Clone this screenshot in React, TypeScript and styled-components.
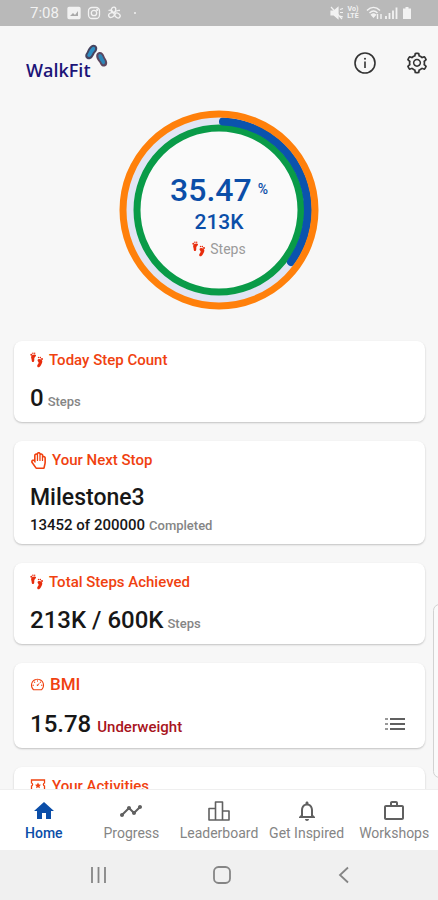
import React from "react";
import styled, { createGlobalStyle } from "styled-components";
import { AiOutlineSetting, AiOutlineDashboard } from "react-icons/ai";
import { FaRegHandPaper } from "react-icons/fa";
import { MdHome, MdTimeline, MdNotificationsNone, MdWorkOutline } from "react-icons/md";

const colors = {
  page: "#f7f7f7",
  blue: "#0b4ea8",
  accent: "#f0410f",
  ink: "#171717",
  muted: "#858585",
};

const GlobalStyle = createGlobalStyle`
  *, *::before, *::after { box-sizing: border-box; }
  body { margin: 0; background: ${colors.page}; font-family: Roboto, sans-serif; color: ${colors.ink}; }
  h1, h2, p { margin: 0; font-weight: 500; }
  svg { display: block; flex: none; }
`;

const Screen = styled.div`
  position: relative;
  display: flex;
  flex-direction: column;
  height: 100vh;
  overflow: hidden;
`;

const StatusBar = styled.div`
  display: flex;
  align-items: center;
  justify-content: space-between;
  flex: none;
  height: 26px;
  padding: 0 26px 0 30px;
  background: #b9b9b9;
  color: #f2f2f2;
  font-size: 15px;
`;

const StatusGroup = styled.div<{ $gap: number }>`
  display: flex;
  align-items: center;
  gap: ${(p) => p.$gap}px;
`;

const Header = styled.header`
  display: flex;
  align-items: center;
  justify-content: space-between;
  flex: none;
  height: 74px;
  padding: 0 9px 0 26px;
`;

const Brand = styled.h1`
  display: flex;
  color: #1c1478;
  font: 600 18px/24px "Open Sans", sans-serif;
  padding-top: 14px;
`;

const BrandMark = styled.svg`
  margin: -14px 0 0 -9px;
`;

const HeaderActions = styled.div`
  display: flex;
  gap: 28px;
  color: #333;
`;

const IconButton = styled.button`
  display: flex;
  padding: 0;
  border: 0;
  background: none;
  color: inherit;
  cursor: pointer;
`;

const Content = styled.main`
  flex: 1;
  min-height: 0;
  overflow: hidden;
`;

const Gauge = styled.section`
  display: grid;
  justify-items: center;
  align-items: center;
  padding: 10px 0 31px;

  & > * {
    grid-area: 1 / 1;
  }
`;

const GaugeText = styled.div`
  display: flex;
  flex-direction: column;
  align-items: center;
  color: ${colors.blue};
  padding-top: 14px;
`;

const Percent = styled.p`
  display: flex;
  gap: 6px;
  font-size: 32px;
  line-height: 36px;
`;

const PercentSign = styled.span`
  font-size: 14px;
  line-height: 34px;
`;

const GaugeTotal = styled.p`
  font-size: 21px;
  line-height: 28px;
`;

const GaugeUnit = styled.p`
  display: flex;
  align-items: center;
  gap: 4px;
  color: #9a9a9a;
  font-size: 14px;
  font-weight: 400;
  line-height: 26px;
`;

const CardList = styled.div`
  display: flex;
  flex-direction: column;
  gap: 19px;
  padding: 0 13px 0 14px;
`;

const Card = styled.section`
  padding: 9px 20px 8px 16px;
  border-radius: 8px;
  background: #fff;
  box-shadow: 0 1px 2px rgba(0, 0, 0, 0.22);
`;

const CardTitle = styled.h2<{ $large?: boolean }>`
  display: flex;
  align-items: center;
  gap: 5px;
  color: ${colors.accent};
  font-size: ${(p) => (p.$large ? 17 : 15)}px;
  line-height: ${(p) => (p.$large ? 24 : 20)}px;
`;

const CardRow = styled.div`
  display: flex;
  align-items: center;
  justify-content: space-between;
  padding-top: 12px;
`;

const Value = styled.p<{ $name?: boolean }>`
  display: flex;
  align-items: baseline;
  gap: 4px;
  height: 32px;
  font-size: ${(p) => (p.$name ? 23 : 24)}px;
  line-height: 32px;
`;

const Unit = styled.span`
  color: ${colors.muted};
  font-size: 13px;
  line-height: 16px;
`;

const Verdict = styled.span`
  color: #a81420;
  font-size: 15px;
  line-height: 16px;
  padding-left: 2px;
`;

const Detail = styled.p`
  display: flex;
  align-items: baseline;
  gap: 4px;
  font-size: 15px;
  line-height: 22px;
`;

const TabBar = styled.nav`
  display: grid;
  grid-template-columns: repeat(5, minmax(0, 1fr));
  flex: none;
  height: 61px;
  background: #fff;
  border-top: 1px solid #efefef;
`;

const Tab = styled.a<{ $active?: boolean }>`
  display: flex;
  flex-direction: column;
  align-items: center;
  padding-top: 9px;
  color: ${(p) => (p.$active ? colors.blue : "#858585")};
  font-size: 14px;
  font-weight: ${(p) => (p.$active ? 500 : 400)};
  line-height: 20px;
  text-decoration: none;
  white-space: nowrap;

  svg {
    color: ${(p) => (p.$active ? colors.blue : "#606060")};
  }
`;

const SystemBar = styled.div`
  display: flex;
  align-items: center;
  justify-content: space-between;
  flex: none;
  height: 50px;
  padding: 0 88px;
  background: #f0f0f0;
  color: #858585;
`;

const EdgeHandle = styled.div`
  position: absolute;
  top: 604px;
  right: -8px;
  width: 13px;
  height: 174px;
  border: 1px solid #d2d2d2;
  border-radius: 7px;
  background: #fafafa;
`;

const Footsteps = () => (
  <svg width="14" height="16" viewBox="0 0 14 16" fill="#e82c0c" aria-hidden="true">
    <circle cx="1.300" cy="2.800" r="1" />
    <circle cx="2.900" cy="1.300" r="0.800" />
    <circle cx="4.700" cy="1.200" r="0.700" />
    <path d="M1.200 4.500C1.700 2.300 5.600 1.800 6 3.300c.3 1.300-1.600 1.700-1.700 3-.1 1.200.3 3-.8 3.600-1.200.5-1.800-.5-1.800-1.700 0-1.500-.9-2.300-.5-3.700z" />
    <circle cx="12" cy="7" r="1" />
    <circle cx="10.300" cy="5.600" r="0.800" />
    <circle cx="8.500" cy="5.500" r="0.700" />
    <path d="M12.300 9C12 7 8.200 6.300 7.600 7.900c-.5 1.300 1.400 1.900 1 3.200-.4 1.200-2 2.300-1.200 3.700.9 1.200 2.600.3 3.200-1 .7-1.500 1.900-3 1.700-4.800z" />
  </svg>
);

const ShoePrints = () => (
  <BrandMark width="28" height="26" viewBox="0 0 28 26" aria-hidden="true">
    <g transform="rotate(34 9 8)">
      <path d="M9 0c3.500 0 4.500 3.500 4 6-.3 2 .4 3 .2 5.500C13 14.500 11.300 16 9 15.800c-2.300-.2-3.500-2-3.400-4.300.1-1.800-.6-3-.6-5C5 3 6.200 0 9 0z" fill="#454460" />
      <path d="M9 2c1.900 0 2.300 2.200 2 4.500-.2 2 .3 3 .1 4.500-.2 1.700-1 2.500-2.100 2.500s-1.700-1-1.600-2.600c.1-1.600-.5-2.900-.4-4.600C7.100 4 7.500 2 9 2z" fill="#2e8fc4" />
    </g>
    <g transform="rotate(-27 20 16)">
      <path d="M20 7.500c3.300 0 4.300 3.200 3.900 5.900-.3 2 .2 3 0 5.200-.2 2.700-1.700 4.700-3.900 4.500-2.200-.2-3.600-2.300-3.400-4.400.2-1.800-.6-3.300-.6-5.300C16 10.300 17.300 7.500 20 7.500z" fill="#5c4760" />
      <path d="M20 9.500c1.700 0 2.300 2 2 4-.2 2 .2 3 0 4.500-.1 1.500-1 2.700-2 2.700s-1.600-1.100-1.500-2.700c.1-1.500-.5-3-.4-4.500.1-2 .6-4 1.900-4z" fill="#2d86b8" />
    </g>
  </BrandMark>
);

const Rings = () => (
  <svg width="200" height="200" viewBox="0 0 200 200" fill="none" aria-hidden="true">
    <circle cx="100" cy="100" r="88" stroke="#e1e5f4" strokeWidth="10" />
    <circle cx="100" cy="100" r="82" fill="#fafafa" stroke="#099b48" strokeWidth="7" />
    <path
      d="M104 11.500A88.500 88.500 0 0 1 172 152"
      stroke="#0b53ad"
      strokeWidth="8"
      strokeLinecap="round"
    />
    <circle cx="100" cy="100" r="96" stroke="#ff800b" strokeWidth="7" />
  </svg>
);

const NotificationIcons = () => (
  <svg width="72" height="14" viewBox="0 0 72 14" fill="none" stroke="#f2f2f2" strokeWidth="1.300" aria-hidden="true">
    <rect x="1" y="1.500" width="12" height="11" rx="1" fill="#f2f2f2" />
    <path d="M3 10l3-3 2 2 3-4v5z" fill="#a9a9a9" stroke="none" />
    <rect x="21.500" y="1.500" width="11" height="11" rx="3.500" />
    <circle cx="27" cy="7" r="2.700" />
    <circle cx="30.200" cy="3.900" r="0.500" />
    <ellipse cx="46.500" cy="3.800" rx="2.200" ry="2.800" transform="rotate(15 46.500 3.800)" />
    <ellipse cx="44.500" cy="9" rx="3" ry="2.200" transform="rotate(-25 44.500 9)" />
    <ellipse cx="50.500" cy="9.500" rx="2.800" ry="2.200" transform="rotate(35 50.500 9.500)" />
    <path d="M41.500 4.500c2-1 4 0 5.500 2.500M53 4.500c-2.500-.5-4.500.5-6 2.500" />
    <circle cx="68" cy="7" r="1" fill="#f2f2f2" stroke="none" />
  </svg>
);

const MuteIcon = () => (
  <svg width="14" height="14" viewBox="0 0 14 14" fill="#f2f2f2" stroke="#f2f2f2" strokeWidth="1.200" aria-hidden="true">
    <path d="M1 5h3l4-3.500v11L4 9H1z" />
    <path d="M1 1l11 12M10 3.500l3-1M10 6.500h3M10 10l3 1" fill="none" />
  </svg>
);

const Volte = styled.span`
  width: 14px;
  margin-right: 4px;
  font-size: 7px;
  font-weight: 700;
  line-height: 7px;
  text-align: center;
`;

const SignalIcons = () => (
  <svg width="46" height="14" viewBox="0 0 46 14" fill="none" stroke="#f2f2f2" strokeWidth="1.400" aria-hidden="true">
    <path d="M1 4.500c4-4 9-4 13 0M3.500 7c2.600-2.500 5.500-2.500 8 0" />
    <path d="M5.500 8.800c1.300-1.200 2.700-1.200 4 0l-2 2.200z" fill="#f2f2f2" />
    <path d="M11.500 8v5M15 8v5" />
    <path d="M20 10v3M23.500 7v6M27 4.500V13M30.500 1.500V13" strokeWidth="1.800" />
    <path d="M37 2.500h2.500V1h3v1.500H45V13h-8z" fill="#f2f2f2" stroke="none" />
  </svg>
);

const InfoIcon = () => (
  <svg width="24" height="24" viewBox="0 0 24 24" fill="none" stroke="currentColor" strokeWidth="1.600" aria-hidden="true">
    <circle cx="12" cy="12" r="10" />
    <path d="M12 10.500v6.500" />
    <circle cx="12" cy="7.700" r="1" fill="currentColor" stroke="none" />
  </svg>
);

const PodiumIcon = () => (
  <svg width="24" height="24" viewBox="0 0 24 24" fill="none" stroke="currentColor" strokeWidth="1.600" strokeLinejoin="round" aria-hidden="true">
    <path d="M2 9.500h6.500V21H2zM8.500 3h7v18h-7zM15.500 12H22v9h-6.500z" />
  </svg>
);

const ListIcon = () => (
  <svg width="20" height="14" viewBox="0 0 20 14" fill="#606060" aria-hidden="true">
    <path d="M0 1h3v2H0zM0 6h3v2H0zM0 11h3v2H0z" fill="#999" />
    <path d="M5 1h15v2H5zM5 6h15v2H5zM5 11h15v2H5z" />
  </svg>
);

const ActivitiesIcon = () => (
  <svg width="17" height="14" viewBox="0 0 17 14" fill="none" stroke={colors.accent} strokeWidth="1.300" aria-hidden="true">
    <path d="M1.500 1h13v3c-1.500.5-1.500 2.500 0 3v5h-13V7c1.500-.5 1.500-2.500 0-3z" />
    <path d="M8 3.500l1 2 2 .3-1.500 1.400.4 2-1.900-1-1.900 1 .4-2L5 5.800l2-.3z" fill={colors.accent} stroke="none" />
  </svg>
);

const RecentsIcon = () => (
  <svg width="20" height="18" viewBox="0 0 20 18" stroke="currentColor" strokeWidth="1.800" aria-hidden="true">
    <path d="M4 1v16M10.500 1v16M17 1v16" />
  </svg>
);

const SystemHomeIcon = () => (
  <svg width="18" height="18" viewBox="0 0 18 18" fill="none" stroke="currentColor" strokeWidth="1.800" aria-hidden="true">
    <rect x="1" y="1" width="16" height="16" rx="4.500" />
  </svg>
);

const BackIcon = () => (
  <svg width="14" height="18" viewBox="0 0 14 18" fill="none" stroke="currentColor" strokeWidth="1.800" aria-hidden="true">
    <path d="M12 1.500L4 9l8 7.500" />
  </svg>
);

const tabs = [
  { label: "Home", icon: <MdHome size={24} />, active: true },
  { label: "Progress", icon: <MdTimeline size={24} /> },
  { label: "Leaderboard", icon: <PodiumIcon /> },
  { label: "Get Inspired", icon: <MdNotificationsNone size={24} /> },
  { label: "Workshops", icon: <MdWorkOutline size={24} /> },
];

export default function App() {
  return (
    <Screen>
      <GlobalStyle />
      <StatusBar>
        <StatusGroup $gap={8}>
          <span>7:08</span>
          <NotificationIcons />
        </StatusGroup>
        <StatusGroup $gap={2}>
          <MuteIcon />
          <Volte>Vo) LTE</Volte>
          <SignalIcons />
        </StatusGroup>
      </StatusBar>
      <Header>
        <Brand>
          WalkFit
          <ShoePrints />
        </Brand>
        <HeaderActions>
          <IconButton aria-label="Information">
            <InfoIcon />
          </IconButton>
          <IconButton aria-label="Settings">
            <AiOutlineSetting size={24} />
          </IconButton>
        </HeaderActions>
      </Header>
      <Content>
        <Gauge>
          <Rings />
          <GaugeText>
            <Percent>
              35.47 <PercentSign>%</PercentSign>
            </Percent>
            <GaugeTotal>213K</GaugeTotal>
            <GaugeUnit>
              <Footsteps /> Steps
            </GaugeUnit>
          </GaugeText>
        </Gauge>
        <CardList>
          <Card>
            <CardTitle>
              <Footsteps /> Today Step Count
            </CardTitle>
            <CardRow>
              <Value>
                0 <Unit>Steps</Unit>
              </Value>
            </CardRow>
          </Card>
          <Card>
            <CardTitle>
              <FaRegHandPaper size={17} /> Your Next Stop
            </CardTitle>
            <CardRow>
              <Value $name>Milestone3</Value>
            </CardRow>
            <Detail>
              13452 of 200000 <Unit>Completed</Unit>
            </Detail>
          </Card>
          <Card>
            <CardTitle>
              <Footsteps /> Total Steps Achieved
            </CardTitle>
            <CardRow>
              <Value>
                213K / 600K <Unit>Steps</Unit>
              </Value>
            </CardRow>
          </Card>
          <Card>
            <CardTitle $large>
              <AiOutlineDashboard size={15} /> BMI
            </CardTitle>
            <CardRow>
              <Value>
                15.78 <Verdict>Underweight</Verdict>
              </Value>
              <IconButton aria-label="BMI history">
                <ListIcon />
              </IconButton>
            </CardRow>
          </Card>
          <Card>
            <CardTitle>
              <ActivitiesIcon /> Your Activities
            </CardTitle>
            <CardRow />
          </Card>
        </CardList>
      </Content>
      <TabBar>
        {tabs.map(({ label, icon, active }) => (
          <Tab key={label} href="#" $active={active} aria-current={active ? "page" : undefined}>
            {icon}
            {label}
          </Tab>
        ))}
      </TabBar>
      <SystemBar>
        <IconButton aria-label="Recent apps">
          <RecentsIcon />
        </IconButton>
        <IconButton aria-label="Home screen">
          <SystemHomeIcon />
        </IconButton>
        <IconButton aria-label="Back">
          <BackIcon />
        </IconButton>
      </SystemBar>
      <EdgeHandle />
    </Screen>
  );
}
